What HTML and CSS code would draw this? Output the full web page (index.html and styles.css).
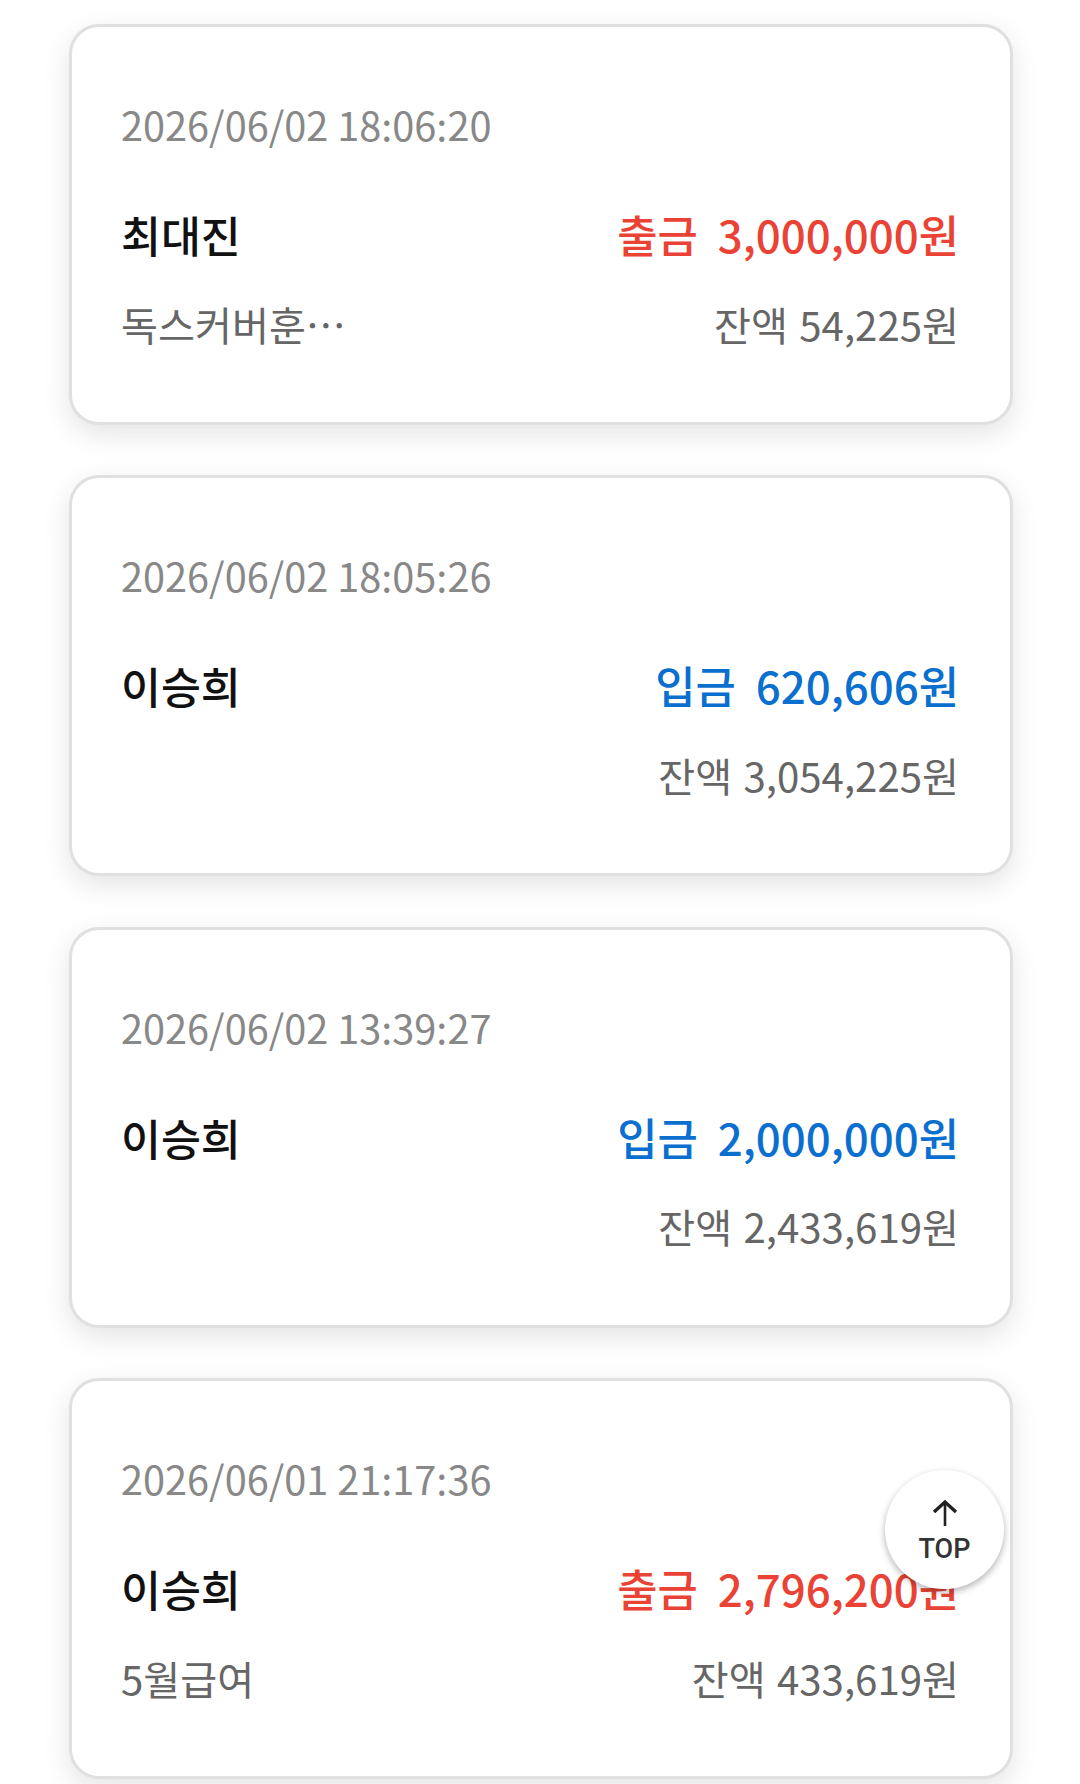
FILE: index.html
```html
<!DOCTYPE html>
<html lang="ko">
<head>
    <meta charset="UTF-8">
    <meta name="viewport" content="width=device-width, initial-scale=1.0">
    <title>거래내역</title>
    <link rel="stylesheet" href="styles.css">
</head>
<body>
    <div class="list">
        <div class="card">
            <div class="date">2026/06/02 18:06:20</div>
            <div class="row main">
                <span class="name">최대진</span>
                <span class="amount out"><span class="kind">출금</span>3,000,000원</span>
            </div>
            <div class="row sub">
                <span class="memo">독스커버훈…</span>
                <span class="balance">잔액 54,225원</span>
            </div>
        </div>
        <div class="card">
            <div class="date">2026/06/02 18:05:26</div>
            <div class="row main">
                <span class="name">이승희</span>
                <span class="amount in"><span class="kind">입금</span>620,606원</span>
            </div>
            <div class="row sub">
                <span class="memo"></span>
                <span class="balance">잔액 3,054,225원</span>
            </div>
        </div>
        <div class="card">
            <div class="date">2026/06/02 13:39:27</div>
            <div class="row main">
                <span class="name">이승희</span>
                <span class="amount in"><span class="kind">입금</span>2,000,000원</span>
            </div>
            <div class="row sub">
                <span class="memo"></span>
                <span class="balance">잔액 2,433,619원</span>
            </div>
        </div>
        <div class="card">
            <div class="date">2026/06/01 21:17:36</div>
            <div class="row main">
                <span class="name">이승희</span>
                <span class="amount out"><span class="kind">출금</span>2,796,200원</span>
            </div>
            <div class="row sub">
                <span class="memo">5월급여</span>
                <span class="balance">잔액 433,619원</span>
            </div>
        </div>
    </div>
    <button class="top" type="button">
        <svg class="top-arrow" width="26" height="28" viewBox="0 0 26 28" fill="none" stroke="#222">
            <path d="M13 27V3" stroke-width="2.6"/>
            <path d="M2 13L13 3l11 10" stroke-width="3.4"/>
        </svg>
        <span>TOP</span>
    </button>
</body>
</html>
```

FILE: styles.css
```css
*{
    margin:0px;
    padding:0px;
    box-sizing:border-box;
}
html,body{
    height:1784px;
    overflow:hidden;
}
body{
    background-color:#fff;
    font-family:"Noto Sans CJK KR","Noto Sans",sans-serif;
    position:relative;
}
.list{
    padding:24px 67px 0 69px;
    display:flex;
    flex-direction:column;
    gap:50.4px;
}
.card{
    height:401px;
    flex-shrink:0;
    background-color:#fff;
    border:3px solid #e0e0e0;
    border-radius:30px;
    padding:72px 51px 0 49px;
    box-shadow:0 9px 28px rgba(0,0,0,0.11);
}
.date{
    font-size:39.7px;
    line-height:50px;
    font-kerning:none;
    font-feature-settings:"calt" 0,"kern" 0,"liga" 0,"locl" 0;
    color:#888;
}
.row{
    display:flex;
    justify-content:space-between;
    align-items:center;
}
.main{
    margin-top:60px;
    height:50px;
}
.sub{
    margin-top:39px;
    height:50px;
}
.name{
    font-size:43.4px;
    font-weight:500;
    color:#111;
}
.amount{
    font-size:43.8px;
    font-weight:500;
}
.kind{
    margin-right:20px;
}
.out{
    color:#ea4335;
}
.in{
    color:#0b6fd0;
}
.memo,.balance{
    font-size:40.2px;
    color:#666;
}
.top{
    position:absolute;
    left:885px;
    top:1470px;
    width:119px;
    height:119px;
    border:none;
    border-radius:50%;
    background-color:#fff;
    box-shadow:0 3px 7px rgba(0,0,0,0.3);
    display:flex;
    flex-direction:column;
    align-items:center;
    justify-content:center;
    padding-top:5px;
    font-family:Roboto,sans-serif;
    font-size:27px;
    line-height:32px;
    font-weight:500;
    color:#333;
}
.top-arrow{
    display:block;
    margin-bottom:6px;
}
```
